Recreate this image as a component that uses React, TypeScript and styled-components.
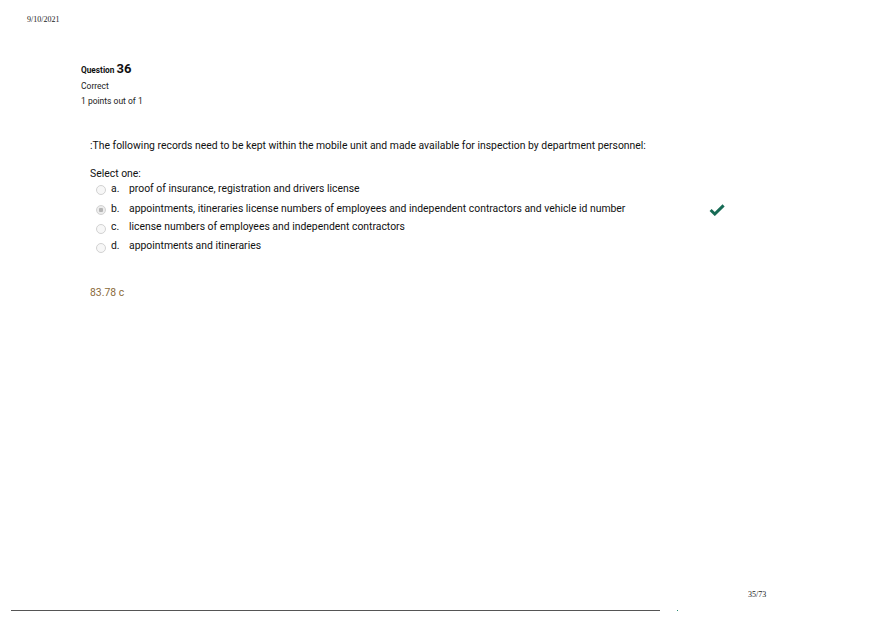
import React from 'react';
import styled, { createGlobalStyle } from 'styled-components';

const GlobalStyle = createGlobalStyle`
  html, body {
    margin: 0;
    padding: 0;
    background: #fff;
  }
`;

interface Option {
  letter: string;
  text: string;
  checked?: boolean;
  correct?: boolean;
}

const options: Option[] = [
  { letter: 'a.', text: 'proof of insurance, registration and drivers license' },
  {
    letter: 'b.',
    text: 'appointments, itineraries license numbers of employees and independent contractors and vehicle id number',
    checked: true,
    correct: true,
  },
  { letter: 'c.', text: 'license numbers of employees and independent contractors' },
  { letter: 'd.', text: 'appointments and itineraries' },
];

const App = () => {
  return (
    <>
      <GlobalStyle />
      <Page>
        <DateStamp>9/10/2021</DateStamp>
        <Info>
          <QNo>
            Question <span>36</span>
          </QNo>
          <State>Correct</State>
          <State>1 points out of 1</State>
        </Info>
        <Content>
          <QText>
            :The following records need to be kept within the mobile unit and made available for inspection by
            department personnel:
          </QText>
          <Prompt>Select one:</Prompt>
          <Answers>
            {options.map((o) => (
              <AnswerRow key={o.letter}>
                <Radio checked={!!o.checked} />
                <Letter>{o.letter}</Letter>
                <AnswerText>{o.text}</AnswerText>
                {o.correct && (
                  <Tick viewBox="0 0 16 12" width="16" height="12">
                    <path d="M1.6 6 L5.8 10 L14.6 1.4" fill="none" stroke="#176b55" strokeWidth="3" />
                  </Tick>
                )}
              </AnswerRow>
            ))}
          </Answers>
          <Feedback>83.78 c</Feedback>
        </Content>
        <Footer>
          <PageNum>35/73</PageNum>
          <Rule>
            <Line />
            <Dot />
          </Rule>
        </Footer>
      </Page>
    </>
  );
};

export default App;

const Page = styled.div`
  width: 880px;
  height: 621px;
  display: flex;
  flex-direction: column;
  box-sizing: border-box;
  padding-top: 15px;
  overflow: hidden;
`;

const DateStamp = styled.div`
  font-family: 'Liberation Serif', serif;
  font-size: 8px;
  color: #222;
  padding-left: 27px;
`;

const Info = styled.div`
  font-family: Roboto, 'Liberation Sans', sans-serif;
  padding-left: 81px;
  margin-top: 38px;
  display: flex;
  flex-direction: column;
  gap: 4px;
`;

const QNo = styled.div`
  font-size: 8.3px;
  font-weight: 700;
  color: #111;
  line-height: 13px;

  span {
    font-size: 13px;
  }
`;

const State = styled.div`
  font-size: 8.5px;
  color: #222;
  line-height: 11px;
`;

const Content = styled.div`
  font-family: Roboto, 'Liberation Sans', sans-serif;
  padding-left: 90px;
  margin-top: 32px;
  color: #111;
`;

const QText = styled.div`
  font-size: 10.4px;
  line-height: 14px;
`;

const Prompt = styled.div`
  font-size: 10.4px;
  line-height: 14px;
  margin-top: 14px;
`;

const Answers = styled.div`
  display: flex;
  flex-direction: column;
  margin-top: -4px;
`;

const AnswerRow = styled.div`
  display: flex;
  align-items: center;
  font-size: 10.4px;
  height: 19px;

  &:nth-child(1) {
    height: 22px;
  }
  &:nth-child(2) {
    height: 18px;
  }
`;

const Radio = styled.span<{ checked: boolean }>`
  width: 8px;
  height: 8px;
  border-radius: 50%;
  border: 1px solid #d2d2d2;
  background: ${({ checked }) => (checked ? 'radial-gradient(circle, #b5b5b5 0 2px, #ececec 2.5px)' : '#f7f7f7')};
  margin-left: 6px;
  margin-right: 5px;
  margin-top: 4px;
  flex-shrink: 0;
`;

const Letter = styled.span`
  width: 18px;
`;

const AnswerText = styled.span`
  white-space: nowrap;
`;

const Tick = styled.svg`
  margin-left: 84px;
  margin-top: 4px;
`;

const Feedback = styled.div`
  font-size: 10.4px;
  color: #8a6a3a;
  margin-top: 31px;
`;

const Footer = styled.div`
  margin-top: auto;
  padding-bottom: 10px;
`;

const PageNum = styled.div`
  font-family: 'Liberation Serif', serif;
  font-size: 8px;
  color: #222;
  padding-left: 748px;
`;

const Rule = styled.div`
  display: flex;
  align-items: center;
  margin-top: 11px;
  padding-left: 11px;
`;

const Line = styled.div`
  width: 649px;
  height: 1px;
  background: #555;
`;

const Dot = styled.div`
  width: 1px;
  height: 1px;
  background: #2a8a70;
  margin-left: 17px;
`;
